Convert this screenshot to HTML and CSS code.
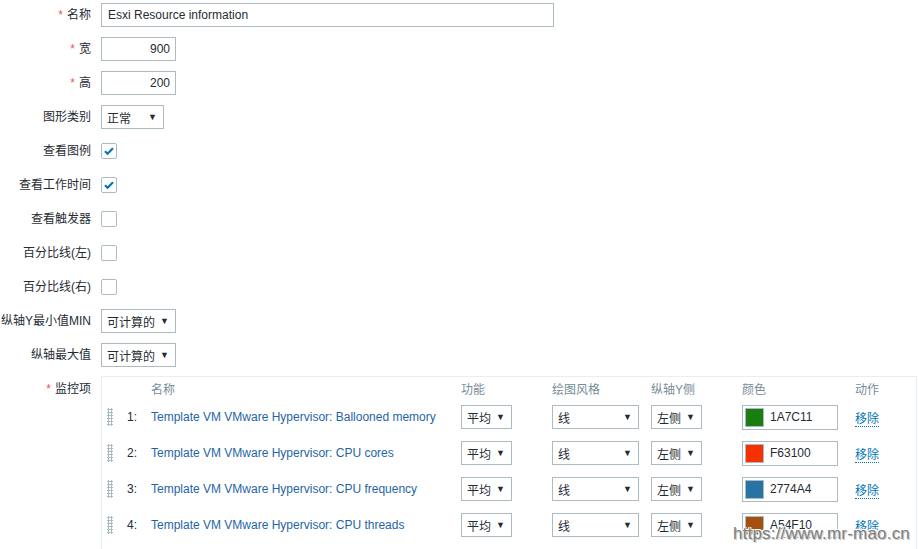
FILE: index.html
```html
<!DOCTYPE html>
<html lang="zh-CN">
<head>
  <meta charset="UTF-8">
  <title>图形</title>
  <link rel="stylesheet" href="styles.css">
</head>
<body>
  <div class="graph-form">
    <div class="form-row">
      <label class="form-label"><span class="req">*</span>名称</label>
      <div class="text-input wide">Esxi Resource information</div>
    </div>
    <div class="form-row">
      <label class="form-label"><span class="req">*</span>宽</label>
      <div class="text-input num">900</div>
    </div>
    <div class="form-row">
      <label class="form-label"><span class="req">*</span>高</label>
      <div class="text-input num">200</div>
    </div>
    <div class="form-row">
      <label class="form-label">图形类别</label>
      <div class="select sel-type"><span>正常</span><span class="arrow">▼</span></div>
    </div>
    <div class="form-row">
      <label class="form-label">查看图例</label>
      <div class="checkbox checked"><svg viewBox="0 0 16 16" width="16" height="16"><path d="M4 8.2l2.6 2.5L12 5.3" fill="none" stroke="#0275b8" stroke-width="2.2"/></svg></div>
    </div>
    <div class="form-row">
      <label class="form-label">查看工作时间</label>
      <div class="checkbox checked"><svg viewBox="0 0 16 16" width="16" height="16"><path d="M4 8.2l2.6 2.5L12 5.3" fill="none" stroke="#0275b8" stroke-width="2.2"/></svg></div>
    </div>
    <div class="form-row">
      <label class="form-label">查看触发器</label>
      <div class="checkbox"></div>
    </div>
    <div class="form-row">
      <label class="form-label">百分比线(左)</label>
      <div class="checkbox"></div>
    </div>
    <div class="form-row">
      <label class="form-label">百分比线(右)</label>
      <div class="checkbox"></div>
    </div>
    <div class="form-row">
      <label class="form-label">纵轴Y最小值MIN</label>
      <div class="select sel-calc"><span>可计算的</span><span class="arrow">▼</span></div>
    </div>
    <div class="form-row">
      <label class="form-label">纵轴最大值</label>
      <div class="select sel-calc"><span>可计算的</span><span class="arrow">▼</span></div>
    </div>
    <div class="form-row top">
      <label class="form-label"><span class="req">*</span>监控项</label>
      <div class="items-table">
        <div class="items-row items-head">
          <div></div>
          <div></div>
          <div>名称</div>
          <div>功能</div>
          <div>绘图风格</div>
          <div>纵轴Y侧</div>
          <div>颜色</div>
          <div>动作</div>
        </div>

        <div class="items-row">
          <div class="drag"></div>
          <div class="num-cell">1:</div>
          <div class="item-name">Template VM VMware Hypervisor: Ballooned memory</div>
          <div class="select sel-func"><span>平均</span><span class="arrow">▼</span></div>
          <div class="select sel-style"><span>线</span><span class="arrow">▼</span></div>
          <div class="select sel-side"><span>左侧</span><span class="arrow">▼</span></div>
          <div class="color-input"><span class="swatch" style="background:#1A7C11"></span>1A7C11</div>
          <div><span class="link-action">移除</span></div>
        </div>

        <div class="items-row">
          <div class="drag"></div>
          <div class="num-cell">2:</div>
          <div class="item-name">Template VM VMware Hypervisor: CPU cores</div>
          <div class="select sel-func"><span>平均</span><span class="arrow">▼</span></div>
          <div class="select sel-style"><span>线</span><span class="arrow">▼</span></div>
          <div class="select sel-side"><span>左侧</span><span class="arrow">▼</span></div>
          <div class="color-input"><span class="swatch" style="background:#F63100"></span>F63100</div>
          <div><span class="link-action">移除</span></div>
        </div>

        <div class="items-row">
          <div class="drag"></div>
          <div class="num-cell">3:</div>
          <div class="item-name">Template VM VMware Hypervisor: CPU frequency</div>
          <div class="select sel-func"><span>平均</span><span class="arrow">▼</span></div>
          <div class="select sel-style"><span>线</span><span class="arrow">▼</span></div>
          <div class="select sel-side"><span>左侧</span><span class="arrow">▼</span></div>
          <div class="color-input"><span class="swatch" style="background:#2774A4"></span>2774A4</div>
          <div><span class="link-action">移除</span></div>
        </div>

        <div class="items-row">
          <div class="drag"></div>
          <div class="num-cell">4:</div>
          <div class="item-name">Template VM VMware Hypervisor: CPU threads</div>
          <div class="select sel-func"><span>平均</span><span class="arrow">▼</span></div>
          <div class="select sel-style"><span>线</span><span class="arrow">▼</span></div>
          <div class="select sel-side"><span>左侧</span><span class="arrow">▼</span></div>
          <div class="color-input"><span class="swatch" style="background:#A54F10"></span>A54F10</div>
          <div><span class="link-action">移除</span></div>
        </div>

        <div class="items-row">
          <div class="drag"></div>
          <div class="num-cell"></div>
          <div class="item-name"></div>
          <div class="select sel-func"></div>
          <div class="select sel-style"></div>
          <div class="select sel-side"></div>
          <div></div>
          <div></div>
        </div>
      </div>
    </div>
  </div>

  <div class="watermark">https://www.mr-mao.cn</div>
</body>
</html>
```

FILE: styles.css
```css
body {
  margin: 0;
  height: 549px;
  overflow: hidden;
  background: #fff;
  color: #1f2c33;
  font-family: "Liberation Sans", Arial, "Noto Sans CJK SC", sans-serif;
  font-size: 12px;
  position: relative;
}

.graph-form {
  padding-top: 3px;
}

.form-row {
  display: flex;
  align-items: center;
  gap: 10px;
  min-height: 24px;
  margin-bottom: 10px;
}

.form-row.top {
  align-items: flex-start;
}

.form-label {
  width: 91px;
  flex: none;
  text-align: right;
  line-height: 24px;
  white-space: nowrap;
}

.req {
  color: #e45959;
  margin-right: 4px;
}

.text-input {
  box-sizing: border-box;
  height: 24px;
  line-height: 22px;
  border: 1px solid #acbbc2;
  padding: 0 5px;
  background: #fff;
}

.text-input.wide {
  width: 453px;
  padding-left: 6px;
}

.text-input.num {
  width: 75px;
  text-align: right;
}

.select {
  box-sizing: border-box;
  height: 24px;
  border: 1px solid #acbbc2;
  padding: 0 6px 0 5px;
  display: flex;
  align-items: center;
  justify-content: space-between;
  background: #fff;
}

.select .arrow {
  font-size: 9px;
  color: #1f2c33;
}

.sel-type { width: 63px; }
.sel-calc { width: 75px; }
.sel-func { width: 51px; }
.sel-style { width: 87px; }
.sel-side { width: 51px; }

.checkbox {
  box-sizing: border-box;
  width: 16px;
  height: 16px;
  border: 1px solid #acbbc2;
  border-radius: 2px;
  position: relative;
}

.checkbox svg {
  position: absolute;
  left: -1px;
  top: -1px;
}

.items-table {
  border-top: 1px solid #ebeef0;
  border-left: 1px solid #ebeef0;
  border-right: 1px solid #ebeef0;
  width: 814px;
  margin-top: -1px;
}

.items-row {
  display: grid;
  grid-template-columns: 22px 27px 310px 91px 99px 91px 113px auto;
  align-items: center;
  height: 36px;
}

.items-head {
  height: 22px;
  color: #768d99;
}

.drag {
  margin-left: 5px;
  width: 6px;
  height: 18px;
  background-image: radial-gradient(circle, #acbbc2 1.2px, transparent 1.4px);
  background-size: 3px 3px;
}

.num-cell {
  text-align: right;
  padding-right: 14px;
}

.item-name {
  color: #1f65a6;
  white-space: nowrap;
}

.color-input {
  box-sizing: border-box;
  width: 96px;
  height: 25px;
  border: 1px solid #acbbc2;
  display: flex;
  align-items: center;
  padding-left: 2px;
  gap: 6px;
}

.swatch {
  width: 19px;
  height: 19px;
  border: 1px solid #acbbc2;
  box-sizing: border-box;
}

.link-action {
  color: #0275b8;
  border-bottom: 1px dotted #0275b8;
}

.watermark {
  position: absolute;
  right: 8px;
  bottom: 5px;
  font-family: "Liberation Sans", Arial, sans-serif;
  font-size: 17px;
  color: #7f7f7f;
  letter-spacing: 0.2px;
  text-shadow: 1px 1px 0 #c8c8c8, -1px -1px 0 #fff, 1px -1px 0 #fff, -1px 1px 0 #fff;
}
```
